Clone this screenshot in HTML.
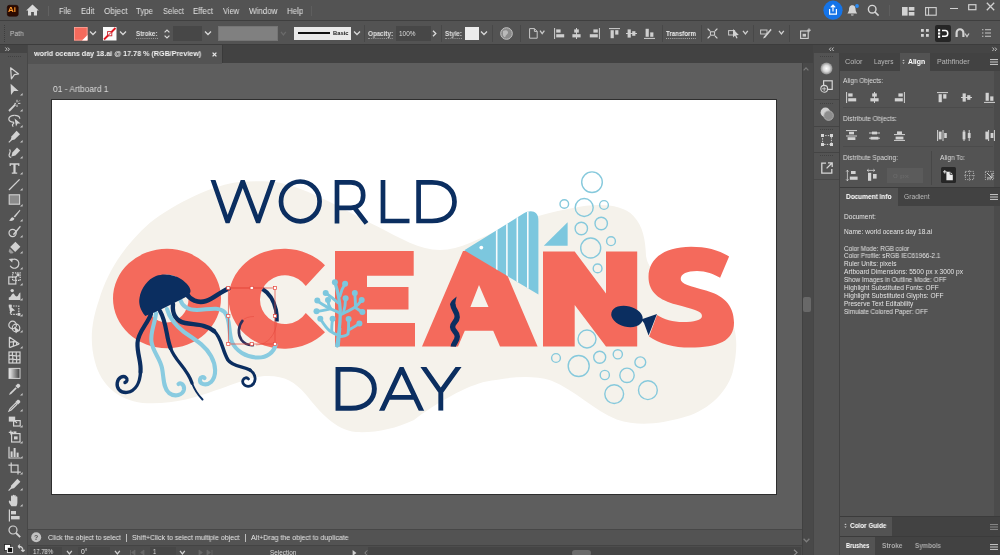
<!DOCTYPE html>
<html><head><meta charset="utf-8"><title>world oceans day 18.ai</title>
<style>
*{margin:0;padding:0;box-sizing:border-box}
html,body{width:1000px;height:555px;overflow:hidden;background:#535353;font-family:"Liberation Sans",sans-serif;}
#app{position:relative;width:1000px;height:555px;overflow:hidden;background:#535353;color:#e0e0e0;font-size:8px}
.abs{position:absolute}
.t{position:absolute;white-space:nowrap;line-height:1;transform-origin:0 50%;will-change:transform}
svg{overflow:visible}

</style></head>
<body><div id="app">
<div class="abs" style="left:0.0px;top:0.0px;width:1000.0px;height:555.0px;background:#535353;"></div>
<div class="abs" style="left:28.0px;top:63.0px;width:774.0px;height:466.0px;background:#5e5e5e;"></div>
<div class="abs" style="left:51.0px;top:99.0px;width:726.0px;height:396.0px;background:#2e2e2e;"></div>
<div class="abs" style="left:52.0px;top:100.0px;width:724.0px;height:394.0px;background:#ffffff;"></div>
<svg class="abs" style="left:52px;top:100px" width="724" height="394" viewBox="52 100 724 394">
<defs><clipPath id="fc"><path d="M464.3,250.3 L523.5,213.6 C528,210.6 533.5,210.4 536.3,213.4 C538,215.4 538.4,217.5 538.4,221 L538.4,294.6 Z"/></clipPath><clipPath id="cw"><rect x="200" y="179.9" width="90" height="43.3"/></clipPath><clipPath id="cd"><rect x="370" y="367" width="100" height="43.7"/></clipPath></defs>
<!-- blob -->
<path fill="#f5f2eb" d="M269,181.5 C300,183 340,208 378,226.7 C400,238 420,250 440,250 C460,250 480,238 503,228 C525,219 550,212 573,208 C595,203.5 621,203 633.5,216 C643,226 645.5,240 646,256 C650,285 700,295 729,316 C738,330 738,350 732.6,372.4 C726,395 705,412 682,417.7 C662,423 640,427 616.7,419.5 C595,411 575,390 551,380.5 C530,374 505,378 486.4,381.5 C468,385 436,403 414,420 C395,429 375,433 356,432 C335,430 320,412 305.4,394 C295,382 285,376 268,376 C250,376 235,384 215,390.5 C195,398 170,405 142.5,403 C118,400 101,385 95,362 C89,340 92,320 99,300 C108,270 125,245 149.7,223 C175,203 215,184 240,182 C250,181 260,181 269,181.5Z"/>
<!-- OCEANS -->
<g fill="#f46a5c">
<path fill-rule="evenodd" d="M113,298.5A54,49.7 0 1 0 221,298.5A54,49.7 0 1 0 113,298.5Z M145,298.5A21.8,24 0 1 0 188.6,298.5A21.8,24 0 1 0 145,298.5Z"/>
<path d="M325,265.2 A55.3,50 0 1 0 325,332.3 L305.8,313.1 A25,24.4 0 1 1 305.8,286.1 Z"/>
<path d="M335,251H413.7V275.7H367V287H408.5V309.6H367V323H415V346.6H335Z"/>
<path d="M463,251H497L537.6,346.6H500L493.2,330.7H464.8L458,346.6H422Z M479,285L470.4,307H488.5Z"/>
<path d="M543,251.5H574.7L606,293.5V251.5H637.2V346.6H606L574.7,305V346.6H543Z"/>
<path d="M729.1,256.4C719,250 706,246.7 691,246.7C664,246.7 648.5,259 648.5,276.7C648.5,293 660,300 676,304.5C692,309 702,310.5 702,316C702,320 694,322 683,322C673,322 664,319.5 657,315L649.1,336.4C659,343.5 674,347.6 690,347.6C718,347.6 734,341 734,322.8C734,304 722,295 706,290.5C690,286 680.7,284 680.7,278.9C680.7,274 687,271 697,271C706,271 714,274 720.1,277.8Z"/>
</g>
<!-- WORLD -->
<g fill="none" stroke="#0b2e60" stroke-width="4.7" stroke-linejoin="miter" stroke-miterlimit="4">
<path clip-path="url(#cw)" stroke-miterlimit="10" d="M211.6,176L227.6,221.8L242.7,181.4L258.1,221.8L274.4,176"/>
<ellipse cx="300.3" cy="201.4" rx="19.3" ry="19.9"/>
<path d="M337,223.4V182.4H351C360,182.4 363.2,189 363.2,195.2C363.2,201.5 360,207.8 351,207.8H337 M354.5,207.8L366.5,223.4"/>
<path d="M383,180V221H409.5"/>
<path d="M418.6,182.4V221H432C447,221 454.5,212 454.5,201.7C454.5,191.5 447,182.4 432,182.4Z"/>
</g>
<!-- DAY -->
<g fill="none" stroke="#0b2e60" stroke-width="4.9" stroke-linejoin="miter" stroke-miterlimit="4">
<path d="M338,369.4V408.3H351C366,408.3 374.4,399.5 374.4,388.8C374.4,378.2 366,369.4 351,369.4Z"/>
<path clip-path="url(#cd)" stroke-miterlimit="10" d="M380,414.5L401.6,368.6L423.2,414.5 M388,397.4H415.5"/>
<path clip-path="url(#cd)" stroke-miterlimit="10" d="M420.6,363L440.8,391.8L461.4,363 M440.8,391V410.7"/>
</g>
<!-- seaweed -->
<path fill="none" stroke="#0b2e60" stroke-width="5.4" d="M452.8,304.5 C453.5,310.5 457.5,312 457.2,317 C457,322 452.5,322.5 452.6,327 C452.7,331 457.3,332 457.3,336.5 C457.3,341 453.5,343 453.3,346.6"/>
<path fill="#0b2e60" d="M456.6,296.4 C453,299.5 449.8,302 450.1,305 L455.5,305.2 C455,302 456.2,299.5 456.6,296.4Z"/>
<!-- big fish -->
<path fill="#7cc7de" d="M464.3,250.3 L523.5,213.6 C528,210.6 533.5,210.4 536.3,213.4 C538,215.4 538.4,217.5 538.4,221 L538.4,294.6 Z"/>
<g clip-path="url(#fc)" stroke="#f7fbfc" stroke-width="1.6"><path d="M496.7,200V300M506.9,200V300M517.3,200V300M527.8,200V300"/></g>
<circle cx="481.3" cy="247.6" r="1.9" fill="#fff"/>
<path fill="#7cc7de" d="M543.8,245.8L567.6,222.2V245.8Z"/>
<!-- bubbles -->
<g fill="none" stroke="#86c9dc" stroke-width="1.4">
<circle cx="592" cy="182.2" r="10.3"/><circle cx="564.3" cy="204" r="4.3"/><circle cx="584.2" cy="207.5" r="9"/><circle cx="604" cy="205" r="4.4"/>
<circle cx="581.3" cy="228.5" r="6.2"/><circle cx="601.2" cy="223.5" r="6.2"/><circle cx="611" cy="241.2" r="4.4"/><circle cx="590.7" cy="248" r="10"/><circle cx="597.6" cy="268.4" r="4.4"/>
<circle cx="587" cy="339" r="9"/><circle cx="556" cy="358" r="4.4"/><circle cx="578.7" cy="366" r="10.5"/><circle cx="599.7" cy="357.2" r="6"/><circle cx="617.8" cy="354.3" r="4.6"/>
<circle cx="640.3" cy="362.3" r="5.4"/><circle cx="604.8" cy="375" r="4.6"/><circle cx="627" cy="375.3" r="7.2"/><circle cx="614.2" cy="394.1" r="9.4"/><circle cx="647.9" cy="390.2" r="9.4"/>
</g>
<!-- small fish -->
<g fill="#0b2e60"><ellipse cx="627" cy="316.4" rx="16" ry="10.3" transform="rotate(14 627 316.4)"/><path d="M641,319.5L657,314L648.6,335.6L644,323Z"/></g>
<g fill="none" stroke="#7cc7de" stroke-width="2.9" stroke-linecap="round" stroke-linejoin="round">
<path d="M337.2,346 C338.5,335 340.8,322 340.2,310 C339.7,300 338,292 335,282.5" stroke-width="3.3"/>
<path d="M340,296 C341,291 343,287 345.1,283.8"/>
<path d="M338.2,303 C334,299 330,296 325.7,293"/>
<path d="M317.3,300.6 C321,304 325,306 330,308.5 C333,310 336,311 339.5,313"/>
<path d="M328,299.9 C328,303 329,306 330.5,308.5"/>
<path d="M316.5,311.3 C320,311 325,310 330.5,308.8"/>
<path d="M320.3,318.7 C323,323 326,328 330,331 C333,333 336,334.5 338.5,335.5"/>
<path d="M332.6,318.7 C332,323 331.5,327 331.8,331.5"/>
<path d="M340.2,315 C346,312 351,310 355.5,306.8 C355.5,302 355,297 354.8,293"/>
<path d="M355.5,306.8 C358,305 360,302.5 361.7,299.9"/>
<path d="M345.6,298.3 C345.5,303 345,308 343.5,312.5"/>
<path d="M355,307.5 C358,309 360,311 362.4,312.1"/>
<path d="M339.5,336.5 C343,336.5 346,336 348,334 C348.8,329 348.6,324 348.6,319"/>
<path d="M348.3,330 C352,328 356,326 359.4,323.6"/>
</g>
<path fill="#7cc7de" d="M334.9,346.6L339.8,346.6L341.4,328L338.4,328Z"/>
<g fill="#7cc7de"><circle cx="334.9" cy="282.3" r="3"/><circle cx="345.1" cy="283.8" r="3"/><circle cx="325.7" cy="293" r="3"/><circle cx="317.3" cy="300.6" r="3"/><circle cx="328" cy="299.9" r="3"/><circle cx="316.5" cy="311.3" r="3"/><circle cx="320.3" cy="318.7" r="3"/><circle cx="332.6" cy="318.7" r="3"/><circle cx="354.8" cy="293" r="3"/><circle cx="345.6" cy="298.3" r="3"/><circle cx="361.7" cy="299.9" r="3"/><circle cx="362.4" cy="312.1" r="3"/><circle cx="348.6" cy="319" r="3"/><circle cx="359.4" cy="323.6" r="3"/></g>
<g fill="none" stroke="#89cbe0" stroke-width="4.1" stroke-linecap="round">
<path d="M156,313 C155,324 150,332 151.5,342 C153,352 160,358 162,368 C164,378 163,388 169,393 C175,397.5 183,395 184,389.5 C184.5,385 181,382 178.5,384" />
<path d="M167,309 C170,320 176,326 184,332 C194,339 205,345 211,356 C216,365 217,376 211,382 C206,386.5 199,384 200,379.5 C200.5,377 203,376.5 204.5,378"/>
<path d="M180,299 C182,306 188,310 197,310 C207,310 218,306 224.5,312 C231,319 228,332 232,342 C236,351 246,357 257,357.5 C267,358 274,352 275.5,345"/>
</g>
<g fill="none" stroke="#0b2e60" stroke-linecap="round">
<path stroke-width="4.6" d="M186,293 C190,300 198,303.5 206,301 C214,298.5 220,292 228.4,288.6"/>
<path stroke-width="4.2" d="M151,314 C147,325 138,332 137.5,343 C137,354 141.5,362 140.5,372"/>
<path stroke-width="3.4" d="M140.5,372 C140,382 136,391 127,392.4 C120,393 116.5,388 117.2,383 C118,377.5 123,375 126,377.5 C128,379 127,382 125,382.5"/>
<path stroke-width="4.2" d="M160,311 C167,323 166,337 170.5,348"/>
<path stroke-width="3.3" d="M170.500,348 C175,361 187,368 192,383"/>
<path stroke-width="2" d="M192,383 C195,391 199,396 202.500,399.500"/>
<path stroke-width="4.4" d="M173,304 C172,314 176,321 185,323 C195,325 206,324 214,331"/>
<path stroke-width="3.6" d="M214,331 C222,338 222,350 228,360 C233,367 243,366 250,370"/>
<path stroke-width="2.8" d="M250,370 C256,374 257,382 251.5,385.5 C246,388 241.5,384 243,380 C244,377.5 247,377 248.5,379"/>
</g>
<path fill="#0b2e60" d="M145.3,316 C140,310 138.5,303 139.5,298 C141,288 148,279 156,276 C164,273 174,274.5 181,279 C187,283 191,288 190.5,291.5 C190,295 186,297 182,299 L165,307.5 C158,311 150,314.5 145.3,316 Z"/>
<g fill="none" stroke="#0b2e60" stroke-linecap="butt">
<path stroke-width="4" d="M262.5,289 C269,293 274,301 276,310 C276.8,314 277,318 276.8,321.5"/>
<path stroke-width="2.6" stroke="#2a2f5c" d="M243,320 C238,326 237.5,334 241.5,340 C244.5,344 249,345.5 254,345"/>
</g>
<g fill="none" stroke="#e5453b" stroke-width="0.7">
<path d="M228.3,288H262.5 M276.8,321.5C276,334 268,345 256,345 M254,316.5C249,316.5 245,318 243,320" opacity="0.7"/>
<rect x="228.3" y="288" width="46.7" height="56"/>
</g>
<g fill="#fff" stroke="#e5453b" stroke-width="0.7"><rect x="226.7" y="286.4" width="3.2" height="3.2"/><rect x="250.1" y="286.4" width="3.2" height="3.2"/><rect x="273.4" y="286.4" width="3.2" height="3.2"/><rect x="226.7" y="314.4" width="3.2" height="3.2"/><rect x="273.4" y="314.4" width="3.2" height="3.2"/><rect x="226.7" y="342.4" width="3.2" height="3.2"/><rect x="250.1" y="342.4" width="3.2" height="3.2"/><rect x="273.4" y="342.4" width="3.2" height="3.2"/></g>
</svg>
<div class="abs" style="left:0.0px;top:20.0px;width:1000.0px;height:1.0px;background:#3f3f3f;"></div>
<svg class="abs" style="left:6.5px;top:4.5px" width="11.5" height="11.5" viewBox="0 0 11.5 11.5"><rect x="0.3" y="0.3" width="10.9" height="10.9" rx="2" fill="#2c0a00" stroke="#1e0700" stroke-width=".6"/></svg>
<div class="t" style="left:8.2px;top:7.4px;font-size:6.60px;color:#ff9b2e;font-weight:bold;transform:scaleX(1.212);">Ai</div>
<svg class="abs" style="left:25.5px;top:4.0px" width="13.0" height="12.0" viewBox="0 0 13 12"><path d="M6.5,0.6 L12.8,6.4 L11,6.4 L11,11.6 L7.9,11.6 L7.9,8 L5.1,8 L5.1,11.6 L2,11.6 L2,6.4 L0.2,6.4 Z" fill="#d9d9d9"/></svg>
<div class="abs" style="left:47.5px;top:6.0px;width:1.0px;height:10.0px;background:#626262;"></div>
<div class="t" style="left:58.5px;top:6.7px;font-size:8.60px;color:#e2e2e2;transform:scaleX(0.888);">File</div>
<div class="t" style="left:80.5px;top:6.7px;font-size:8.60px;color:#e2e2e2;transform:scaleX(0.897);">Edit</div>
<div class="t" style="left:103.5px;top:6.7px;font-size:8.60px;color:#e2e2e2;transform:scaleX(0.945);">Object</div>
<div class="t" style="left:136.0px;top:6.7px;font-size:8.60px;color:#e2e2e2;transform:scaleX(0.912);">Type</div>
<div class="t" style="left:162.5px;top:6.7px;font-size:8.60px;color:#e2e2e2;transform:scaleX(0.879);">Select</div>
<div class="t" style="left:193.0px;top:6.7px;font-size:8.60px;color:#e2e2e2;transform:scaleX(0.916);">Effect</div>
<div class="t" style="left:223.0px;top:6.7px;font-size:8.60px;color:#e2e2e2;transform:scaleX(0.866);">View</div>
<div class="t" style="left:248.5px;top:6.7px;font-size:8.60px;color:#e2e2e2;transform:scaleX(0.932);">Window</div>
<div class="t" style="left:287.0px;top:6.7px;font-size:8.60px;color:#e2e2e2;transform:scaleX(0.916);">Help</div>
<div class="abs" style="left:311.0px;top:6.0px;width:1.0px;height:10.0px;background:#5e5e5e;"></div>
<svg class="abs" style="left:823.0px;top:0.0px" width="20.0" height="20.5" viewBox="0 0 20 20.5"><circle cx="10" cy="10.2" r="9.6" fill="#1574e8"/><path d="M6.6,9 V14.2 H13.4 V9 M10,11.6 V5.2 M7.8,7.3 L10,5 L12.2,7.3" fill="none" stroke="#fff" stroke-width="1.2"/></svg>
<svg class="abs" style="left:846.0px;top:4.0px" width="13.0" height="13.0" viewBox="0 0 13 13"><path d="M6.3,1.2 C3.6,1.2 3,3.6 3,5.6 C3,7.6 2,8.6 1.4,9.4 H11.2 C10.6,8.6 9.6,7.6 9.6,5.6 C9.6,3.6 9,1.2 6.3,1.2Z M5,10.4 H7.6 V11 C7.6,11.8 5,11.8 5,11Z" fill="#d4d4d4"/><circle cx="11" cy="2" r="1.9" fill="#2b8cf4"/></svg>
<svg class="abs" style="left:867.0px;top:4.0px" width="13.0" height="13.0" viewBox="0 0 13 13"><circle cx="5.2" cy="5.2" r="3.8" fill="none" stroke="#d6d6d6" stroke-width="1.4"/><path d="M8,8 L11.6,11.6" stroke="#d6d6d6" stroke-width="1.6"/></svg>
<div class="abs" style="left:889.0px;top:5.0px;width:1.0px;height:11.0px;background:#5e5e5e;"></div>
<svg class="abs" style="left:901.5px;top:6.5px" width="12.5" height="9.0" viewBox="0 0 12.5 9"><rect x="0" y="0" width="5.6" height="8.6" fill="#d2d2d2"/><rect x="6.8" y="0" width="5.6" height="3.6" fill="#d2d2d2"/><rect x="6.8" y="5" width="5.6" height="3.6" fill="#d2d2d2"/></svg>
<svg class="abs" style="left:924.5px;top:6.5px" width="12.0" height="9.0" viewBox="0 0 12 9"><rect x=".6" y=".6" width="10.6" height="7.6" fill="none" stroke="#d2d2d2" stroke-width="1.1"/><path d="M3.6,.6V8.2" stroke="#d2d2d2" stroke-width="1"/></svg>
<div class="abs" style="left:950.0px;top:7.6px;width:8.0px;height:1.6px;background:#d0d0d0;"></div>
<svg class="abs" style="left:967.5px;top:3.5px" width="9.0" height="7.0" viewBox="0 0 9 7"><rect x=".7" y=".7" width="7.2" height="5" fill="none" stroke="#d0d0d0" stroke-width="1.2"/></svg>
<svg class="abs" style="left:986.0px;top:1.8px" width="9.0" height="9.0" viewBox="0 0 9 9"><path d="M.8,.8 L8.2,8.2 M8.2,.8 L.8,8.2" stroke="#d0d0d0" stroke-width="1.3"/></svg>
<div class="abs" style="left:0.0px;top:44.0px;width:1000.0px;height:1.0px;background:#3c3c3c;"></div>
<div class="abs" style="left:3.5px;top:25.0px;width:1.4px;height:1.0px;background:#3d3d3d;"></div>
<div class="abs" style="left:3.5px;top:27.0px;width:1.4px;height:1.0px;background:#3d3d3d;"></div>
<div class="abs" style="left:3.5px;top:29.0px;width:1.4px;height:1.0px;background:#3d3d3d;"></div>
<div class="abs" style="left:3.5px;top:31.0px;width:1.4px;height:1.0px;background:#3d3d3d;"></div>
<div class="abs" style="left:3.5px;top:33.0px;width:1.4px;height:1.0px;background:#3d3d3d;"></div>
<div class="abs" style="left:3.5px;top:35.0px;width:1.4px;height:1.0px;background:#3d3d3d;"></div>
<div class="abs" style="left:3.5px;top:37.0px;width:1.4px;height:1.0px;background:#3d3d3d;"></div>
<div class="abs" style="left:3.5px;top:39.0px;width:1.4px;height:1.0px;background:#3d3d3d;"></div>
<div class="abs" style="left:3.5px;top:41.0px;width:1.4px;height:1.0px;background:#3d3d3d;"></div>
<div class="t" style="left:10.0px;top:30.9px;font-size:6.80px;color:#c4c4c4;transform:scaleX(0.965);">Path</div>
<svg class="abs" style="left:74.0px;top:26.5px" width="13.5" height="13.5" viewBox="0 0 13.5 13.5"><rect width="13.5" height="13.5" fill="#f46a5c"/><rect x=".4" y=".4" width="12.7" height="12.7" fill="none" stroke="#f9a59c" stroke-width=".8"/><path d="M13.5,8 V13.5 H8Z" fill="#fff"/></svg>
<svg class="abs" style="left:89.0px;top:30.2px" width="8.0" height="6.0" viewBox="0 0 8 6"><path d="M1,1.5 L4,4.5 L7,1.5" fill="none" stroke="#d8d8d8" stroke-width="1.3"/></svg>
<svg class="abs" style="left:103.0px;top:26.5px" width="13.5" height="13.5" viewBox="0 0 13.5 13.5"><rect width="13.5" height="13.5" fill="#fafafa"/><path d="M1,12.5 L12.5,1" stroke="#e1131c" stroke-width="1.8"/><rect x="4.6" y="4.6" width="4.2" height="4.2" fill="#fafafa" stroke="#c8202a" stroke-width=".9"/><path d="M4,9.5 L9.5,4" stroke="#e1131c" stroke-width="1"/></svg>
<svg class="abs" style="left:118.5px;top:30.2px" width="8.0" height="6.0" viewBox="0 0 8 6"><path d="M1,1.5 L4,4.5 L7,1.5" fill="none" stroke="#d8d8d8" stroke-width="1.3"/></svg>
<div class="t" style="left:136.0px;top:31.0px;font-size:6.60px;color:#e0e0e0;font-weight:bold;transform:scaleX(0.945);border-bottom:1px dotted #9a9a9a;padding-bottom:0.5px;">Stroke:</div>
<svg class="abs" style="left:164.0px;top:28.5px" width="6.0" height="10.0" viewBox="0 0 6 10"><path d="M.6,3.4 L3,1 L5.4,3.4 M.6,6.6 L3,9 L5.4,6.6" fill="none" stroke="#d8d8d8" stroke-width="1.2"/></svg>
<div class="abs" style="left:173.0px;top:26.0px;width:29.0px;height:15.0px;background:#474747;"></div>
<svg class="abs" style="left:203.5px;top:30.2px" width="8.0" height="6.0" viewBox="0 0 8 6"><path d="M1,1.5 L4,4.5 L7,1.5" fill="none" stroke="#d8d8d8" stroke-width="1.3"/></svg>
<div class="abs" style="left:218.0px;top:26.0px;width:59.5px;height:14.5px;background:#808080;border:1px solid #757575;"></div>
<svg class="abs" style="left:280.1px;top:31.0px" width="6.8" height="4.8" viewBox="0 0 6.8 4.8"><path d="M1,0.9 L3.4,3.9 L5.8,0.9" fill="none" stroke="#6a6a6a" stroke-width="1.3"/></svg>
<div class="abs" style="left:294.0px;top:26.5px;width:57.0px;height:13.5px;background:#e9e9e9;"></div>
<div class="abs" style="left:297.5px;top:32.2px;width:32.5px;height:2.0px;background:#111;"></div>
<div class="t" style="left:332.5px;top:31.0px;font-size:5.80px;color:#1a1a1a;font-weight:bold;transform:scaleX(1.001);">Basic</div>
<svg class="abs" style="left:352.5px;top:30.2px" width="8.0" height="6.0" viewBox="0 0 8 6"><path d="M1,1.5 L4,4.5 L7,1.5" fill="none" stroke="#d8d8d8" stroke-width="1.3"/></svg>
<div class="abs" style="left:364.0px;top:25.0px;width:1.0px;height:17.0px;background:#484848;"></div>
<div class="t" style="left:367.5px;top:31.0px;font-size:6.60px;color:#e0e0e0;font-weight:bold;transform:scaleX(0.947);border-bottom:1px dotted #9a9a9a;padding-bottom:0.5px;">Opacity:</div>
<div class="abs" style="left:395.5px;top:26.0px;width:35.0px;height:15.0px;background:#474747;"></div>
<div class="t" style="left:398.5px;top:31.1px;font-size:6.40px;color:#dcdcdc;transform:scaleX(1.008);">100%</div>
<svg class="abs" style="left:432.0px;top:30.0px" width="5.0" height="7.0" viewBox="0 0 5 7"><path d="M1,.8 L3.8,3.5 L1,6.2" fill="none" stroke="#dcdcdc" stroke-width="1.3"/></svg>
<div class="abs" style="left:441.0px;top:25.0px;width:1.0px;height:17.0px;background:#484848;"></div>
<div class="t" style="left:444.5px;top:31.0px;font-size:6.60px;color:#e0e0e0;font-weight:bold;transform:scaleX(0.946);border-bottom:1px dotted #9a9a9a;padding-bottom:0.5px;">Style:</div>
<div class="abs" style="left:465.0px;top:26.5px;width:13.5px;height:13.5px;background:#ececec;"></div>
<svg class="abs" style="left:480.0px;top:30.2px" width="8.0" height="6.0" viewBox="0 0 8 6"><path d="M1,1.5 L4,4.5 L7,1.5" fill="none" stroke="#d8d8d8" stroke-width="1.3"/></svg>
<div class="abs" style="left:492.0px;top:25.0px;width:1.0px;height:17.0px;background:#484848;"></div>
<svg class="abs" style="left:499.5px;top:27.0px" width="13.0" height="13.0" viewBox="0 0 13 13"><circle cx="6.5" cy="6.5" r="5.8" fill="#8a8a8a" stroke="#c4c4c4" stroke-width="1"/><path d="M3,4 C5,2.5 7.5,3 8,5 C8.5,7 6,7.5 5.5,9.5 C5,11 3.5,10 3,8Z" fill="#b9b9b9"/></svg>
<div class="abs" style="left:519.5px;top:25.0px;width:1.0px;height:17.0px;background:#484848;"></div>
<svg class="abs" style="left:529.0px;top:27.5px" width="9.0" height="11.0" viewBox="0 0 9 11"><path d="M.6,.6 H5.4 L8.2,3.4 V10.2 H.6Z M5.4,.6 V3.4 H8.2" fill="none" stroke="#c8c8c8" stroke-width="1"/></svg>
<svg class="abs" style="left:539.3px;top:30.4px" width="6.4" height="4.4" viewBox="0 0 6.4 4.4"><path d="M1,0.7 L3.2,3.7 L5.4,0.7" fill="none" stroke="#c8c8c8" stroke-width="1.3"/></svg>
<svg class="abs" style="left:553.5px;top:27.7px" width="11.0" height="11.0" viewBox="0 0 11 11"><path d="M.6,0V11" stroke="#cfcfcf" stroke-width="1"/><rect x="2.2" y="1.4" width="4.4" height="3.2" fill="#cfcfcf"/><rect x="2.2" y="6.2" width="8" height="3.2" fill="#cfcfcf"/></svg>
<svg class="abs" style="left:571.0px;top:27.7px" width="11.0" height="11.0" viewBox="0 0 11 11"><path d="M5.5,0V11" stroke="#cfcfcf" stroke-width="1"/><rect x="3.2" y="1.4" width="4.6" height="3.2" fill="#cfcfcf"/><rect x="1.4" y="6.2" width="8.2" height="3.2" fill="#cfcfcf"/></svg>
<svg class="abs" style="left:588.5px;top:27.7px" width="11.0" height="11.0" viewBox="0 0 11 11"><path d="M10.4,0V11" stroke="#cfcfcf" stroke-width="1"/><rect x="4.4" y="1.4" width="4.4" height="3.2" fill="#cfcfcf"/><rect x=".8" y="6.2" width="8" height="3.2" fill="#cfcfcf"/></svg>
<svg class="abs" style="left:608.5px;top:27.7px" width="11.0" height="11.0" viewBox="0 0 11 11"><path d="M0,.6H11" stroke="#cfcfcf" stroke-width="1"/><rect x="1.6" y="2.2" width="3.2" height="8" fill="#cfcfcf"/><rect x="6.2" y="2.2" width="3.2" height="4.4" fill="#cfcfcf"/></svg>
<svg class="abs" style="left:626.0px;top:27.7px" width="11.0" height="11.0" viewBox="0 0 11 11"><path d="M0,5.5H11" stroke="#cfcfcf" stroke-width="1"/><rect x="1.6" y="1.4" width="3.2" height="8.2" fill="#cfcfcf"/><rect x="6.2" y="3.2" width="3.2" height="4.6" fill="#cfcfcf"/></svg>
<svg class="abs" style="left:643.5px;top:27.7px" width="11.0" height="11.0" viewBox="0 0 11 11"><path d="M0,10.4H11" stroke="#cfcfcf" stroke-width="1"/><rect x="1.6" y=".8" width="3.2" height="8" fill="#cfcfcf"/><rect x="6.2" y="4.4" width="3.2" height="4.4" fill="#cfcfcf"/></svg>
<div class="abs" style="left:662.0px;top:25.0px;width:1.0px;height:17.0px;background:#484848;"></div>
<div class="t" style="left:666.0px;top:30.7px;font-size:6.40px;color:#f0f0f0;font-weight:bold;transform:scaleX(0.959);border-bottom:1px dotted #aaa;padding-bottom:0.5px;">Transform</div>
<div class="abs" style="left:701.0px;top:25.0px;width:1.0px;height:17.0px;background:#484848;"></div>
<svg class="abs" style="left:706.5px;top:27.5px" width="11.0" height="11.0" viewBox="0 0 11 11"><rect x="3.4" y="3.8" width="4.2" height="3.4" fill="none" stroke="#d2d2d2" stroke-width="1"/><path d="M.6,.6L3,3M10.4,.6L8,3M.6,10.4L3,8M10.4,10.4L8,8" stroke="#d2d2d2" stroke-width="1.2"/></svg>
<svg class="abs" style="left:727.5px;top:27.5px" width="12.0" height="11.0" viewBox="0 0 12 11"><rect x=".6" y="2.6" width="6" height="4.4" fill="none" stroke="#c8c8c8" stroke-width="1"/><path d="M5,1 L5,9.4 L7,7.6 L8.4,10.6 L9.6,10 L8.2,7.2 L10.8,7Z" fill="#d2d2d2"/></svg>
<svg class="abs" style="left:742.1px;top:30.4px" width="6.8" height="4.8" viewBox="0 0 6.8 4.8"><path d="M1,0.9 L3.4,3.9 L5.8,0.9" fill="none" stroke="#d0d0d0" stroke-width="1.3"/></svg>
<div class="abs" style="left:753.0px;top:25.0px;width:1.0px;height:17.0px;background:#484848;"></div>
<svg class="abs" style="left:759.5px;top:27.5px" width="12.0" height="11.0" viewBox="0 0 12 11"><rect x=".6" y="2" width="6.4" height="4" fill="none" stroke="#c8c8c8" stroke-width="1"/><path d="M10.6,.8 L4,8.6 L3,10.6 L5.2,9.8 L11.6,2Z" fill="#d2d2d2"/></svg>
<svg class="abs" style="left:777.6px;top:30.4px" width="6.8" height="4.8" viewBox="0 0 6.8 4.8"><path d="M1,0.9 L3.4,3.9 L5.8,0.9" fill="none" stroke="#d0d0d0" stroke-width="1.3"/></svg>
<div class="abs" style="left:789.0px;top:25.0px;width:1.0px;height:17.0px;background:#484848;"></div>
<svg class="abs" style="left:799.5px;top:27.5px" width="11.0" height="11.0" viewBox="0 0 11 11"><rect x=".6" y="3" width="7.6" height="7.4" fill="none" stroke="#d2d2d2" stroke-width="1.1"/><rect x="2.6" y="5.8" width="3.4" height="2.8" fill="#c8c8c8"/><path d="M9,.4V4.2M7.2,2.2H10.8" stroke="#d2d2d2" stroke-width="1"/></svg>
<svg class="abs" style="left:921.0px;top:29.0px" width="8.0" height="8.0" viewBox="0 0 8 8"><rect x="0" y="0" width="2.8" height="2.8" fill="#d2d2d2"/><rect x="5" y="0" width="2.8" height="2.8" fill="#d2d2d2"/><rect x="0" y="5" width="2.8" height="2.8" fill="#d2d2d2"/><rect x="5" y="5" width="2.8" height="2.8" fill="#d2d2d2"/></svg>
<div class="abs" style="left:935.0px;top:25.0px;width:15.5px;height:16.5px;background:#262626;border-radius:2px;"></div>
<svg class="abs" style="left:937.5px;top:28.5px" width="11.0" height="9.0" viewBox="0 0 11 9"><rect x="0" y=".2" width="2.2" height="2.2" fill="#fff"/><rect x="0" y="3.4" width="2.2" height="2.2" fill="#fff"/><rect x="0" y="6.6" width="2.2" height="2.2" fill="#fff"/><path d="M4,1.6H7.2C10.6,1.6 10.6,7.2 7.2,7.2H4" fill="none" stroke="#fff" stroke-width="1.5"/></svg>
<svg class="abs" style="left:954.5px;top:28.0px" width="10.0" height="10.0" viewBox="0 0 10 10"><path d="M1.6,9 V5 C1.6,0 8.4,0 8.4,5 V9" fill="none" stroke="#d2d2d2" stroke-width="2.2"/></svg>
<svg class="abs" style="left:964.0px;top:33.0px" width="6.0" height="4.0" viewBox="0 0 6 4"><path d="M1,0.5 L3,3.5 L5,0.5" fill="none" stroke="#c8c8c8" stroke-width="1.3"/></svg>
<svg class="abs" style="left:981.5px;top:29.0px" width="9.0" height="8.0" viewBox="0 0 9 8"><path d="M0,.8H1.4M0,4H1.4M0,7.2H1.4M3,.8H9M3,4H9M3,7.2H9" stroke="#c8c8c8" stroke-width="1.1"/></svg>
<div class="abs" style="left:28.0px;top:45.0px;width:812.0px;height:18.0px;background:#424242;"></div>
<div class="abs" style="left:28.0px;top:45.0px;width:193.5px;height:18.5px;background:#535353;"></div>
<div class="abs" style="left:221.5px;top:45.0px;width:1.0px;height:18.0px;background:#3a3a3a;"></div>
<div class="t" style="left:33.5px;top:50.4px;font-size:7.90px;color:#f2f2f2;font-weight:bold;transform:scaleX(0.909);">world oceans day 18.ai @ 17.78 % (RGB/Preview)</div>
<svg class="abs" style="left:211.5px;top:52.0px" width="5.0" height="5.0" viewBox="0 0 5 5"><path d="M.6,.6L4.4,4.4M4.4,.6L.6,4.4" stroke="#e8e8e8" stroke-width="1.3"/></svg>
<div class="t" style="left:52.5px;top:85.1px;font-size:8.60px;color:#dadada;transform:scaleX(0.976);">01 - Artboard 1</div>
<div class="abs" style="left:801.5px;top:63.0px;width:11.5px;height:492.0px;background:#494949;"></div>
<div class="abs" style="left:801.5px;top:63.0px;width:1.0px;height:492.0px;background:#414141;"></div>
<div class="abs" style="left:802.5px;top:296.5px;width:8.8px;height:15.5px;background:#686868;border-radius:2px;"></div>
<svg class="abs" style="left:803.0px;top:66.5px" width="6.0" height="4.0" viewBox="0 0 6 4"><path d="M.6,3.4L3,.8L5.4,3.4" fill="none" stroke="#7a7a7a" stroke-width="1.2"/></svg>
<svg class="abs" style="left:803.0px;top:537.5px" width="7.0" height="5.0" viewBox="0 0 7 5"><path d="M.6,.8L3.5,3.8L6.4,.8" fill="none" stroke="#7d7d7d" stroke-width="1.3"/></svg>
<div class="abs" style="left:28.0px;top:529.0px;width:773.5px;height:16.0px;background:#535353;"></div>
<div class="abs" style="left:28.0px;top:529.0px;width:773.5px;height:1.0px;background:#474747;"></div>
<svg class="abs" style="left:31.0px;top:532.0px" width="10.5" height="10.5" viewBox="0 0 10.5 10.5"><circle cx="5.2" cy="5.2" r="5" fill="#c2c2c2"/></svg>
<div class="t" style="left:34.2px;top:534.2px;font-size:7.00px;color:#555;font-weight:bold;transform:scaleX(0.935);">?</div>
<div class="t" style="left:48.0px;top:534.4px;font-size:7.20px;color:#e8e8e8;transform:scaleX(0.940);">Click the object to select</div>
<div class="abs" style="left:126.3px;top:533.5px;width:1.0px;height:8.0px;background:#bdbdbd;"></div>
<div class="t" style="left:132.0px;top:534.4px;font-size:7.20px;color:#e8e8e8;transform:scaleX(0.969);">Shift+Click to select multiple object</div>
<div class="abs" style="left:245.4px;top:533.5px;width:1.0px;height:8.0px;background:#bdbdbd;"></div>
<div class="t" style="left:250.6px;top:534.4px;font-size:7.20px;color:#e8e8e8;transform:scaleX(0.975);">Alt+Drag the object to duplicate</div>
<div class="abs" style="left:28.0px;top:545.5px;width:773.5px;height:9.5px;background:#4d4d4d;"></div>
<div class="abs" style="left:28.0px;top:545.0px;width:773.5px;height:1.0px;background:#444;"></div>
<div class="abs" style="left:30.0px;top:547.0px;width:32.0px;height:8.0px;background:#474747;"></div>
<div class="t" style="left:32.5px;top:549.3px;font-size:6.60px;color:#e6e6e6;transform:scaleX(0.893);">17.78%</div>
<svg class="abs" style="left:65.6px;top:549.6px" width="6.8" height="4.8" viewBox="0 0 6.8 4.8"><path d="M1,0.9 L3.4,3.9 L5.8,0.9" fill="none" stroke="#d0d0d0" stroke-width="1.3"/></svg>
<div class="abs" style="left:78.0px;top:547.0px;width:32.0px;height:8.0px;background:#474747;"></div>
<div class="t" style="left:80.5px;top:549.3px;font-size:6.60px;color:#e6e6e6;transform:scaleX(1.030);">0°</div>
<svg class="abs" style="left:113.6px;top:549.6px" width="6.8" height="4.8" viewBox="0 0 6.8 4.8"><path d="M1,0.9 L3.4,3.9 L5.8,0.9" fill="none" stroke="#d0d0d0" stroke-width="1.3"/></svg>
<svg class="abs" style="left:130.0px;top:549.5px" width="16.0" height="5.0" viewBox="0 0 16 5"><path d="M.5,0V5M5,0L1.6,2.6L5,5Z M14,0L10.6,2.6L14,5Z" fill="#686868" stroke="#686868" stroke-width=".8"/></svg>
<div class="abs" style="left:150.0px;top:547.0px;width:26.0px;height:8.0px;background:#474747;"></div>
<div class="t" style="left:153.0px;top:549.3px;font-size:6.60px;color:#e6e6e6;transform:scaleX(0.817);">1</div>
<svg class="abs" style="left:179.1px;top:549.6px" width="6.8" height="4.8" viewBox="0 0 6.8 4.8"><path d="M1,0.9 L3.4,3.9 L5.8,0.9" fill="none" stroke="#d0d0d0" stroke-width="1.3"/></svg>
<svg class="abs" style="left:197.0px;top:549.5px" width="16.0" height="5.0" viewBox="0 0 16 5"><path d="M2,0L5.4,2.6L2,5Z M10,0L13.4,2.6L10,5Z M15,0V5" fill="#686868" stroke="#686868" stroke-width=".8"/></svg>
<div class="t" style="left:270.0px;top:550.3px;font-size:6.40px;color:#dadada;transform:scaleX(0.988);">Selection</div>
<svg class="abs" style="left:352.0px;top:549.5px" width="5.0" height="5.5" viewBox="0 0 5 5.5"><path d="M.6,0L4.4,3L.6,6Z" fill="#cfcfcf"/></svg>
<svg class="abs" style="left:363.5px;top:549.5px" width="4.0" height="5.5" viewBox="0 0 4 5.5"><path d="M3.2,.4L.8,3L3.2,5.6" fill="none" stroke="#8a8a8a" stroke-width="1"/></svg>
<div class="abs" style="left:368.0px;top:547.0px;width:433.0px;height:8.0px;background:#454545;"></div>
<div class="abs" style="left:571.5px;top:550.0px;width:19.0px;height:6.0px;background:#6b6b6b;border-radius:3px;"></div>
<svg class="abs" style="left:793.0px;top:548.5px" width="5.0" height="7.0" viewBox="0 0 5 7"><path d="M1,.8L4,3.6L1,6.4" fill="none" stroke="#8a8a8a" stroke-width="1.2"/></svg>
<div class="abs" style="left:0.0px;top:45.0px;width:28.0px;height:510.0px;background:#535353;"></div>
<div class="abs" style="left:0.0px;top:45.0px;width:28.0px;height:8.0px;background:#454545;"></div>
<div class="abs" style="left:27.0px;top:45.0px;width:1.0px;height:510.0px;background:#474747;"></div>
<svg class="abs" style="left:4.5px;top:46.5px" width="5.0" height="4.5" viewBox="0 0 5 4.5"><path d="M.4,.5L2,2.2L.4,4 M2.8,.5L4.4,2.2L2.8,4" fill="none" stroke="#cfcfcf" stroke-width=".9"/></svg>
<div class="abs" style="left:8.0px;top:55.5px;width:1.0px;height:1.0px;background:#414141;"></div>
<div class="abs" style="left:10.0px;top:55.5px;width:1.0px;height:1.0px;background:#414141;"></div>
<div class="abs" style="left:12.0px;top:55.5px;width:1.0px;height:1.0px;background:#414141;"></div>
<div class="abs" style="left:14.0px;top:55.5px;width:1.0px;height:1.0px;background:#414141;"></div>
<div class="abs" style="left:16.0px;top:55.5px;width:1.0px;height:1.0px;background:#414141;"></div>
<div class="abs" style="left:18.0px;top:55.5px;width:1.0px;height:1.0px;background:#414141;"></div>
<div class="abs" style="left:20.0px;top:55.5px;width:1.0px;height:1.0px;background:#414141;"></div>
<svg class="abs" style="left:7.5px;top:67.0px" width="13.0" height="13.0" viewBox="0 0 13 13"><path d="M2.6,.8 L10.6,7 L6.4,7.6 L3.4,11.8Z" fill="none" stroke="#d2d2d2" stroke-width="1.2" stroke-linejoin="round"/></svg>
<svg class="abs" style="left:7.5px;top:82.8px" width="13.0" height="13.0" viewBox="0 0 13 13"><path d="M2.6,.8 L10.6,8 L6,8 L3,12Z" fill="#d2d2d2"/></svg>
<svg class="abs" style="left:20.3px;top:92.9px" width="2.6" height="2.6" viewBox="0 0 2.6 2.6"><path d="M2.6,0V2.6H0Z" fill="#c6c6c6"/></svg>
<svg class="abs" style="left:7.5px;top:98.6px" width="13.0" height="13.0" viewBox="0 0 13 13"><path d="M1,12 L7.4,5.4" stroke="#d2d2d2" stroke-width="1.8"/><path d="M9,.8V3.4M9,5.6V8M6.4,4.4H8M10,4.4H12.4M10.8,2.4L11.6,1.6" stroke="#d2d2d2" stroke-width="1"/></svg>
<svg class="abs" style="left:20.3px;top:108.7px" width="2.6" height="2.6" viewBox="0 0 2.6 2.6"><path d="M2.6,0V2.6H0Z" fill="#c6c6c6"/></svg>
<svg class="abs" style="left:7.5px;top:114.4px" width="13.0" height="13.0" viewBox="0 0 13 13"><path d="M6.4,1.4 C2.8,1.4 .8,3.2 .8,5 C.8,6.8 2.8,8.2 5,8.2 C6,8.2 6,9.4 5,10 C4,10.6 4.4,12 5.4,12.4" fill="none" stroke="#d2d2d2" stroke-width="1.2"/><path d="M6.4,1.4C10,1.4 11.8,3 11.8,4.8" fill="none" stroke="#d2d2d2" stroke-width="1.2"/><path d="M6.6,4.6L12.6,9.4L9.6,9.6L8,12.4Z" fill="#d2d2d2"/></svg>
<svg class="abs" style="left:20.3px;top:124.5px" width="2.6" height="2.6" viewBox="0 0 2.6 2.6"><path d="M2.6,0V2.6H0Z" fill="#c6c6c6"/></svg>
<svg class="abs" style="left:7.5px;top:130.2px" width="13.0" height="13.0" viewBox="0 0 13 13"><path d="M8.6,.8L12,4.2L6.6,9.4L2.6,10.4L3.6,6.2Z" fill="#d2d2d2"/><path d="M.8,12.4L3.4,9.8" stroke="#d2d2d2" stroke-width="1.2"/></svg>
<svg class="abs" style="left:20.3px;top:140.3px" width="2.6" height="2.6" viewBox="0 0 2.6 2.6"><path d="M2.6,0V2.6H0Z" fill="#c6c6c6"/></svg>
<svg class="abs" style="left:7.5px;top:146.0px" width="13.0" height="13.0" viewBox="0 0 13 13"><path d="M9,1.4L12.2,4.6L7.4,9.6L3.4,10.6L4.4,6.6Z" fill="#d2d2d2"/><path d="M3.2,11.4C1,11.4 .6,9.4 1.6,7.6C2.6,5.8 2.6,4.6 1.6,3.4" fill="none" stroke="#d2d2d2" stroke-width="1.2"/></svg>
<svg class="abs" style="left:20.3px;top:156.1px" width="2.6" height="2.6" viewBox="0 0 2.6 2.6"><path d="M2.6,0V2.6H0Z" fill="#c6c6c6"/></svg>
<svg class="abs" style="left:7.5px;top:161.8px" width="13.0" height="13.0" viewBox="0 0 13 13"><path d="M1.6,1.2H11.4V4H10.2V2.8H7.6V10.6H9.2V11.8H3.8V10.6H5.4V2.8H2.8V4H1.6Z" fill="#d2d2d2"/></svg>
<svg class="abs" style="left:20.3px;top:171.9px" width="2.6" height="2.6" viewBox="0 0 2.6 2.6"><path d="M2.6,0V2.6H0Z" fill="#c6c6c6"/></svg>
<svg class="abs" style="left:7.5px;top:177.6px" width="13.0" height="13.0" viewBox="0 0 13 13"><path d="M1,12L11.6,1.4" stroke="#d2d2d2" stroke-width="1.3"/></svg>
<svg class="abs" style="left:20.3px;top:187.7px" width="2.6" height="2.6" viewBox="0 0 2.6 2.6"><path d="M2.6,0V2.6H0Z" fill="#c6c6c6"/></svg>
<svg class="abs" style="left:7.5px;top:193.4px" width="13.0" height="13.0" viewBox="0 0 13 13"><rect x="1.2" y="1.8" width="10.4" height="9.4" fill="#8b8b8b" stroke="#d2d2d2" stroke-width="1.1"/></svg>
<svg class="abs" style="left:20.3px;top:203.5px" width="2.6" height="2.6" viewBox="0 0 2.6 2.6"><path d="M2.6,0V2.6H0Z" fill="#c6c6c6"/></svg>
<svg class="abs" style="left:7.5px;top:209.2px" width="13.0" height="13.0" viewBox="0 0 13 13"><path d="M11.8,.8L5.6,7.4L7,8.6L12.4,1.6Z" fill="#d2d2d2"/><path d="M4.8,8.2C3,8.2 3,10 1,11.6C3.4,12.4 6.2,11.6 6.4,9.6Z" fill="#d2d2d2"/></svg>
<svg class="abs" style="left:20.3px;top:219.3px" width="2.6" height="2.6" viewBox="0 0 2.6 2.6"><path d="M2.6,0V2.6H0Z" fill="#c6c6c6"/></svg>
<svg class="abs" style="left:7.5px;top:225.0px" width="13.0" height="13.0" viewBox="0 0 13 13"><circle cx="4.6" cy="8" r="3.6" fill="none" stroke="#d2d2d2" stroke-width="1.2"/><path d="M12,.8L5.6,8.2L5,10L6.8,9.4L12.8,1.8Z" fill="#d2d2d2"/></svg>
<svg class="abs" style="left:20.3px;top:235.1px" width="2.6" height="2.6" viewBox="0 0 2.6 2.6"><path d="M2.6,0V2.6H0Z" fill="#c6c6c6"/></svg>
<svg class="abs" style="left:7.5px;top:240.8px" width="13.0" height="13.0" viewBox="0 0 13 13"><path d="M7.4,.8L12.4,5.8L7.2,11L2.2,6Z" fill="#d2d2d2"/><path d="M1.6,7.4L5.6,11.4L4.4,12.4H2.4L.6,10.4Z" fill="#9a9a9a"/></svg>
<svg class="abs" style="left:20.3px;top:250.9px" width="2.6" height="2.6" viewBox="0 0 2.6 2.6"><path d="M2.6,0V2.6H0Z" fill="#c6c6c6"/></svg>
<svg class="abs" style="left:7.5px;top:256.6px" width="13.0" height="13.0" viewBox="0 0 13 13"><path d="M3,3.4A4.6,4.6 0 1 1 2.2,8.8" fill="none" stroke="#d2d2d2" stroke-width="1.2" stroke-width="1.5"/><path d="M.6,2L4.8,1.4L4.2,5.6Z" fill="#d2d2d2"/></svg>
<svg class="abs" style="left:20.3px;top:266.7px" width="2.6" height="2.6" viewBox="0 0 2.6 2.6"><path d="M2.6,0V2.6H0Z" fill="#c6c6c6"/></svg>
<svg class="abs" style="left:7.5px;top:272.4px" width="13.0" height="13.0" viewBox="0 0 13 13"><rect x=".8" y="5" width="7" height="7" fill="none" stroke="#d2d2d2" stroke-width="1.2"/><rect x="4.6" y=".8" width="7.6" height="7.6" fill="none" stroke="#d2d2d2" stroke-width="1.2" stroke-dasharray="1.4 .9"/><path d="M7,6L10.6,2.4M8.4,2.2H10.8V4.6" fill="none" stroke="#d2d2d2" stroke-width="1.2" stroke-width="1"/></svg>
<svg class="abs" style="left:20.3px;top:282.5px" width="2.6" height="2.6" viewBox="0 0 2.6 2.6"><path d="M2.6,0V2.6H0Z" fill="#c6c6c6"/></svg>
<svg class="abs" style="left:7.5px;top:288.2px" width="13.0" height="13.0" viewBox="0 0 13 13"><path d="M.8,9.6C3,9.6 3.6,5.6 5.2,5.6C6.8,5.6 6.6,8.4 8.6,8.4C10.6,8.4 10.6,4.4 12.4,4.4V12H.8Z" fill="#d2d2d2"/><circle cx="4.2" cy="2.6" r="1.7" fill="#d2d2d2"/></svg>
<svg class="abs" style="left:20.3px;top:298.3px" width="2.6" height="2.6" viewBox="0 0 2.6 2.6"><path d="M2.6,0V2.6H0Z" fill="#c6c6c6"/></svg>
<svg class="abs" style="left:7.5px;top:304.0px" width="13.0" height="13.0" viewBox="0 0 13 13"><rect x="2.4" y="2" width="8.4" height="8.4" fill="none" stroke="#d2d2d2" stroke-width="1.2" stroke-dasharray="1.6 1"/><rect x=".8" y=".6" width="2.8" height="2.8" fill="#d2d2d2"/><rect x="9.6" y="9" width="2.8" height="2.8" fill="#d2d2d2"/><path d="M.8,1L7.2,6.6L4.2,7L2.6,10.2Z" fill="#d2d2d2"/></svg>
<svg class="abs" style="left:20.3px;top:314.1px" width="2.6" height="2.6" viewBox="0 0 2.6 2.6"><path d="M2.6,0V2.6H0Z" fill="#c6c6c6"/></svg>
<svg class="abs" style="left:7.5px;top:319.8px" width="13.0" height="13.0" viewBox="0 0 13 13"><circle cx="4.6" cy="5" r="3.8" fill="none" stroke="#d2d2d2" stroke-width="1.2"/><circle cx="8" cy="8" r="3.8" fill="none" stroke="#d2d2d2" stroke-width="1.2"/><path d="M6,6.6L12.4,11L9.4,11.2L8,13.4Z" fill="#d2d2d2"/></svg>
<svg class="abs" style="left:20.3px;top:329.9px" width="2.6" height="2.6" viewBox="0 0 2.6 2.6"><path d="M2.6,0V2.6H0Z" fill="#c6c6c6"/></svg>
<svg class="abs" style="left:7.5px;top:335.6px" width="13.0" height="13.0" viewBox="0 0 13 13"><path d="M1.4,1V11.6M1.4,1L11.4,8M1.4,11.6L11.4,8M1.4,6.2L8,5.6M5.4,3.8V10.2M8.6,6V9" fill="none" stroke="#d2d2d2" stroke-width="1.2" stroke-width="1"/></svg>
<svg class="abs" style="left:20.3px;top:345.7px" width="2.6" height="2.6" viewBox="0 0 2.6 2.6"><path d="M2.6,0V2.6H0Z" fill="#c6c6c6"/></svg>
<svg class="abs" style="left:7.5px;top:351.4px" width="13.0" height="13.0" viewBox="0 0 13 13"><rect x="1" y="1" width="11" height="11" fill="none" stroke="#d2d2d2" stroke-width="1.2" stroke-width="1"/><path d="M1,4.6C4,3.4 8,6 12,4.6M1,8.4C4,7.2 8,9.8 12,8.4M4.6,1C3.6,4 6,8 4.6,12M8.4,1C7.4,4 9.8,8 8.4,12" fill="none" stroke="#d2d2d2" stroke-width="1.2" stroke-width=".9"/></svg>
<svg class="abs" style="left:7.5px;top:367.2px" width="13.0" height="13.0" viewBox="0 0 13 13"><defs><linearGradient id="tg" x1="0" x2="1"><stop offset="0" stop-color="#f0f0f0"/><stop offset="1" stop-color="#3a3a3a"/></linearGradient></defs><rect x="1" y="1.4" width="11" height="10" fill="url(#tg)" stroke="#d2d2d2" stroke-width="1"/></svg>
<svg class="abs" style="left:7.5px;top:383.0px" width="13.0" height="13.0" viewBox="0 0 13 13"><path d="M9.6,.8C11,.2 12.8,2 12.2,3.400L10,5.600L7.400,3Z" fill="#d2d2d2"/><path d="M7.600,4.200L2,9.800L1,12L3.200,11L8.800,5.400Z" fill="#d2d2d2"/></svg>
<svg class="abs" style="left:20.3px;top:393.1px" width="2.6" height="2.6" viewBox="0 0 2.6 2.6"><path d="M2.6,0V2.6H0Z" fill="#c6c6c6"/></svg>
<svg class="abs" style="left:7.5px;top:398.8px" width="13.0" height="13.0" viewBox="0 0 13 13"><path d="M9.6,.8C11,.2 12.8,2 12.2,3.400L10,5.600L7.400,3Z" fill="#d2d2d2"/><path d="M7.600,4.200L2,9.800L1,12L3.200,11L8.800,5.400Z" fill="none" stroke="#d2d2d2" stroke-width="1.2" stroke-width="1"/></svg>
<svg class="abs" style="left:20.3px;top:408.9px" width="2.6" height="2.6" viewBox="0 0 2.6 2.6"><path d="M2.6,0V2.6H0Z" fill="#c6c6c6"/></svg>
<svg class="abs" style="left:7.5px;top:414.6px" width="13.0" height="13.0" viewBox="0 0 13 13"><rect x=".8" y="1.6" width="6.4" height="5" fill="#d2d2d2"/><rect x="5.600" y="5.600" width="6.600" height="5.400" fill="none" stroke="#d2d2d2" stroke-width="1.2"/><path d="M3,4.200C5,4 7,6 9,8" fill="none" stroke="#d2d2d2" stroke-width="1.2" stroke-width=".9"/></svg>
<svg class="abs" style="left:20.3px;top:424.7px" width="2.6" height="2.6" viewBox="0 0 2.6 2.6"><path d="M2.6,0V2.6H0Z" fill="#c6c6c6"/></svg>
<svg class="abs" style="left:7.5px;top:430.4px" width="13.0" height="13.0" viewBox="0 0 13 13"><rect x="3.600" y="3.600" width="8.400" height="8.400" fill="none" stroke="#d2d2d2" stroke-width="1.2"/><rect x="6" y="6.400" width="3.600" height="3" fill="#d2d2d2"/><path d="M.8,2.400H5M2.800,.6V4.600" fill="none" stroke="#d2d2d2" stroke-width="1.2" stroke-width="1"/><rect x="5.400" y="1.400" width="3" height="2.200" fill="#d2d2d2"/></svg>
<svg class="abs" style="left:20.3px;top:440.5px" width="2.6" height="2.6" viewBox="0 0 2.6 2.6"><path d="M2.6,0V2.6H0Z" fill="#c6c6c6"/></svg>
<svg class="abs" style="left:7.5px;top:446.2px" width="13.0" height="13.0" viewBox="0 0 13 13"><path d="M1,.8V12H12.600" fill="none" stroke="#d2d2d2" stroke-width="1.2"/><rect x="2.600" y="5.400" width="2" height="5.600" fill="#d2d2d2"/><rect x="5.600" y="2" width="2" height="9" fill="#d2d2d2"/><rect x="8.600" y="6.600" width="2" height="4.400" fill="#d2d2d2"/></svg>
<svg class="abs" style="left:20.3px;top:456.3px" width="2.6" height="2.6" viewBox="0 0 2.6 2.6"><path d="M2.6,0V2.6H0Z" fill="#c6c6c6"/></svg>
<svg class="abs" style="left:7.5px;top:462.0px" width="13.0" height="13.0" viewBox="0 0 13 13"><path d="M3.200,.6V10.200H12.800M.4,3.200H10V12.600" fill="none" stroke="#d2d2d2" stroke-width="1.2" stroke-width="1.100"/></svg>
<svg class="abs" style="left:20.3px;top:472.1px" width="2.6" height="2.6" viewBox="0 0 2.6 2.6"><path d="M2.6,0V2.6H0Z" fill="#c6c6c6"/></svg>
<svg class="abs" style="left:7.5px;top:477.8px" width="13.0" height="13.0" viewBox="0 0 13 13"><path d="M9.400,.8L12.400,3.800L6,10.200L2.400,11L3.200,7.400Z" fill="#d2d2d2"/><path d="M.6,12.600L3.200,10" stroke="#d2d2d2" stroke-width="1.100"/></svg>
<svg class="abs" style="left:20.3px;top:487.9px" width="2.6" height="2.6" viewBox="0 0 2.6 2.6"><path d="M2.6,0V2.6H0Z" fill="#c6c6c6"/></svg>
<svg class="abs" style="left:7.5px;top:493.6px" width="13.0" height="13.0" viewBox="0 0 13 13"><path d="M3.400,12.200C2,10 .6,8.400 .8,7.200C1,6.200 2.200,6.400 3,7.600V2.400C3,1.200 4.600,1.200 4.600,2.400V1.600C4.600,.4 6.200,.4 6.200,1.600V2C6.200,.8 7.800,.8 7.800,2V3C7.800,2 9.400,2 9.400,3.200V8C9.400,10 9,11 8.400,12.200Z" fill="#d2d2d2"/></svg>
<svg class="abs" style="left:20.3px;top:503.7px" width="2.6" height="2.6" viewBox="0 0 2.6 2.6"><path d="M2.6,0V2.6H0Z" fill="#c6c6c6"/></svg>
<svg class="abs" style="left:7.5px;top:509.4px" width="13.0" height="13.0" viewBox="0 0 13 13"><path d="M1.400,.6V12.600" fill="none" stroke="#d2d2d2" stroke-width="1.2"/><rect x="3" y="2" width="5" height="3.400" fill="#d2d2d2"/><rect x="3" y="7" width="8.600" height="3.400" fill="#d2d2d2"/></svg>
<svg class="abs" style="left:7.5px;top:525.2px" width="13.0" height="13.0" viewBox="0 0 13 13"><circle cx="5" cy="5" r="4" fill="none" stroke="#d2d2d2" stroke-width="1.2" stroke-width="1.400"/><path d="M8,8L12.200,12.200" stroke="#d2d2d2" stroke-width="1.800"/></svg>
<svg class="abs" style="left:3.5px;top:543.5px" width="8.5" height="8.5" viewBox="0 0 8.5 8.5"><rect x=".5" y=".5" width="6" height="6" fill="#fff" stroke="#222" stroke-width=".8"/><rect x="3.400" y="3.400" width="5.200" height="5.200" fill="#111" stroke="#eee" stroke-width=".9"/></svg>
<svg class="abs" style="left:16.5px;top:543.5px" width="7.0" height="8.0" viewBox="0 0 7 8"><path d="M1,2.400C4.600,2 6.200,4 6,7.600M1,2.400L3,.6M1,2.400L3,4.400M6,7.600L4.200,5.800M6,7.600L7.600,5.800" fill="none" stroke="#d2d2d2" stroke-width="1.2" stroke-width="1.100"/></svg>
<div class="abs" style="left:813.0px;top:45.0px;width:187.0px;height:8.0px;background:#454545;"></div>
<div class="abs" style="left:813.0px;top:53.0px;width:27.0px;height:502.0px;background:#535353;"></div>
<div class="abs" style="left:812.5px;top:53.0px;width:1.0px;height:502.0px;background:#464646;"></div>
<svg class="abs" style="left:828.5px;top:46.5px" width="5.5" height="4.5" viewBox="0 0 5.5 4.5"><path d="M2,.5L.4,2.200L2,4 M4.600,.5L3,2.200L4.600,4" fill="none" stroke="#cfcfcf" stroke-width=".9"/></svg>
<svg class="abs" style="left:992.0px;top:46.5px" width="5.5" height="4.5" viewBox="0 0 5.5 4.5"><path d="M.4,.5L2,2.200L.4,4 M3,.5L4.600,2.200L3,4" fill="none" stroke="#cfcfcf" stroke-width=".9"/></svg>
<div class="abs" style="left:820.0px;top:56.0px;width:1.0px;height:1.0px;background:#414141;"></div>
<div class="abs" style="left:822.0px;top:56.0px;width:1.0px;height:1.0px;background:#414141;"></div>
<div class="abs" style="left:824.0px;top:56.0px;width:1.0px;height:1.0px;background:#414141;"></div>
<div class="abs" style="left:826.0px;top:56.0px;width:1.0px;height:1.0px;background:#414141;"></div>
<div class="abs" style="left:828.0px;top:56.0px;width:1.0px;height:1.0px;background:#414141;"></div>
<div class="abs" style="left:830.0px;top:56.0px;width:1.0px;height:1.0px;background:#414141;"></div>
<div class="abs" style="left:832.0px;top:56.0px;width:1.0px;height:1.0px;background:#414141;"></div>
<svg class="abs" style="left:820.0px;top:62.0px" width="13.0" height="13.0" viewBox="0 0 13 13"><defs><radialGradient id="cg"><stop offset="0" stop-color="#fff"/><stop offset=".55" stop-color="#d8d8d8"/><stop offset="1" stop-color="#8a8a8a"/></radialGradient></defs><circle cx="6.500" cy="6.500" r="6" fill="url(#cg)"/></svg>
<svg class="abs" style="left:820.0px;top:80.0px" width="13.0" height="13.0" viewBox="0 0 13 13"><rect x="3.600" y=".8" width="8.600" height="8.600" fill="none" stroke="#d6d6d6" stroke-width="1.200"/><circle cx="4.200" cy="8.800" r="3.400" fill="#535353" stroke="#d6d6d6" stroke-width="1.100"/><path d="M2,8.800H6.400M4.200,6.600V11" stroke="#d6d6d6" stroke-width=".8"/></svg>
<div class="abs" style="left:814.0px;top:99.0px;width:25.0px;height:1.0px;background:#444;"></div>
<div class="abs" style="left:820.0px;top:102.5px;width:1.0px;height:1.0px;background:#414141;"></div>
<div class="abs" style="left:822.0px;top:102.5px;width:1.0px;height:1.0px;background:#414141;"></div>
<div class="abs" style="left:824.0px;top:102.5px;width:1.0px;height:1.0px;background:#414141;"></div>
<div class="abs" style="left:826.0px;top:102.5px;width:1.0px;height:1.0px;background:#414141;"></div>
<div class="abs" style="left:828.0px;top:102.5px;width:1.0px;height:1.0px;background:#414141;"></div>
<div class="abs" style="left:830.0px;top:102.5px;width:1.0px;height:1.0px;background:#414141;"></div>
<div class="abs" style="left:832.0px;top:102.5px;width:1.0px;height:1.0px;background:#414141;"></div>
<svg class="abs" style="left:819.5px;top:106.5px" width="14.0" height="14.0" viewBox="0 0 14 14"><circle cx="5.400" cy="5.400" r="4.800" fill="#d0d0d0"/><circle cx="8.600" cy="8.600" r="4.800" fill="#8d8d8d" stroke="#b5b5b5" stroke-width=".8"/></svg>
<div class="abs" style="left:814.0px;top:125.5px;width:25.0px;height:1.0px;background:#444;"></div>
<div class="abs" style="left:820.0px;top:129.0px;width:1.0px;height:1.0px;background:#414141;"></div>
<div class="abs" style="left:822.0px;top:129.0px;width:1.0px;height:1.0px;background:#414141;"></div>
<div class="abs" style="left:824.0px;top:129.0px;width:1.0px;height:1.0px;background:#414141;"></div>
<div class="abs" style="left:826.0px;top:129.0px;width:1.0px;height:1.0px;background:#414141;"></div>
<div class="abs" style="left:828.0px;top:129.0px;width:1.0px;height:1.0px;background:#414141;"></div>
<div class="abs" style="left:830.0px;top:129.0px;width:1.0px;height:1.0px;background:#414141;"></div>
<div class="abs" style="left:832.0px;top:129.0px;width:1.0px;height:1.0px;background:#414141;"></div>
<svg class="abs" style="left:820.5px;top:133.5px" width="12.0" height="12.0" viewBox="0 0 12 12"><rect x="1.600" y="1.600" width="8.800" height="8.800" fill="none" stroke="#cfcfcf" stroke-width="1" stroke-dasharray="1.400 1.200"/><rect x="0" y="0" width="3" height="3" fill="#d6d6d6"/><rect x="9" y="0" width="3" height="3" fill="#d6d6d6"/><rect x="0" y="9" width="3" height="3" fill="#d6d6d6"/><rect x="9" y="9" width="3" height="3" fill="#d6d6d6"/></svg>
<div class="abs" style="left:814.0px;top:151.5px;width:25.0px;height:1.0px;background:#444;"></div>
<div class="abs" style="left:820.0px;top:155.0px;width:1.0px;height:1.0px;background:#414141;"></div>
<div class="abs" style="left:822.0px;top:155.0px;width:1.0px;height:1.0px;background:#414141;"></div>
<div class="abs" style="left:824.0px;top:155.0px;width:1.0px;height:1.0px;background:#414141;"></div>
<div class="abs" style="left:826.0px;top:155.0px;width:1.0px;height:1.0px;background:#414141;"></div>
<div class="abs" style="left:828.0px;top:155.0px;width:1.0px;height:1.0px;background:#414141;"></div>
<div class="abs" style="left:830.0px;top:155.0px;width:1.0px;height:1.0px;background:#414141;"></div>
<div class="abs" style="left:832.0px;top:155.0px;width:1.0px;height:1.0px;background:#414141;"></div>
<svg class="abs" style="left:820.5px;top:162.0px" width="12.0" height="12.0" viewBox="0 0 12 12"><path d="M5,1.200H.8V11.200H10.800V7" fill="none" stroke="#d6d6d6" stroke-width="1.300"/><path d="M5.600,6.400L11,1M7,.8H11.200V5" fill="none" stroke="#d6d6d6" stroke-width="1.300"/></svg>
<div class="abs" style="left:814.0px;top:179.0px;width:25.0px;height:1.0px;background:#484848;"></div>
<div class="abs" style="left:840.0px;top:53.0px;width:160.0px;height:502.0px;background:#535353;"></div>
<div class="abs" style="left:839.0px;top:53.0px;width:1.0px;height:502.0px;background:#424242;"></div>
<div class="abs" style="left:993.5px;top:70.0px;width:6.5px;height:117.0px;background:#4b4b4b;"></div>
<div class="abs" style="left:993.5px;top:205.0px;width:6.5px;height:311.0px;background:#4b4b4b;"></div>
<div class="abs" style="left:840.0px;top:53.0px;width:160.0px;height:17.5px;background:#424242;"></div>
<div class="abs" style="left:899.5px;top:53.0px;width:30.5px;height:17.5px;background:#535353;"></div>
<div class="t" style="left:845.0px;top:58.7px;font-size:6.50px;color:#b9b9b9;transform:scaleX(1.127);">Color</div>
<div class="t" style="left:873.5px;top:58.7px;font-size:6.50px;color:#b9b9b9;transform:scaleX(0.999);">Layers</div>
<svg class="abs" style="left:901.5px;top:59.0px" width="3.0" height="5.5" viewBox="0 0 3 5.5"><path d="M1.500,.4L2.700,2L.3,2Z M1.500,5.100L2.700,3.500L.3,3.500Z" fill="#c8c8c8"/></svg>
<div class="t" style="left:908.0px;top:58.6px;font-size:6.70px;color:#ffffff;font-weight:bold;transform:scaleX(1.027);">Align</div>
<div class="t" style="left:936.5px;top:58.7px;font-size:6.50px;color:#b9b9b9;transform:scaleX(1.097);">Pathfinder</div>
<svg class="abs" style="left:989.5px;top:58.5px" width="8.0" height="6.0" viewBox="0 0 8 6"><path d="M0,.6H8M0,3H8M0,5.400H8" stroke="#cfcfcf" stroke-width="1"/></svg>
<div class="t" style="left:843.0px;top:77.6px;font-size:6.70px;color:#dedede;transform:scaleX(0.968);">Align Objects:</div>
<svg class="abs" style="left:845.5px;top:91.5px" width="11.0" height="11.0" viewBox="0 0 11 11"><path d="M.6,0V11" stroke="#d2d2d2" stroke-width="1"/><rect x="2.2" y="1.4" width="4.4" height="3.2" fill="#d2d2d2"/><rect x="2.2" y="6.2" width="8" height="3.2" fill="#d2d2d2"/></svg>
<svg class="abs" style="left:869.3px;top:91.5px" width="11.0" height="11.0" viewBox="0 0 11 11"><path d="M5.5,0V11" stroke="#d2d2d2" stroke-width="1"/><rect x="3.2" y="1.4" width="4.6" height="3.2" fill="#d2d2d2"/><rect x="1.4" y="6.2" width="8.2" height="3.2" fill="#d2d2d2"/></svg>
<svg class="abs" style="left:893.5px;top:91.5px" width="11.0" height="11.0" viewBox="0 0 11 11"><path d="M10.4,0V11" stroke="#d2d2d2" stroke-width="1"/><rect x="4.4" y="1.4" width="4.4" height="3.2" fill="#d2d2d2"/><rect x=".8" y="6.2" width="8" height="3.2" fill="#d2d2d2"/></svg>
<svg class="abs" style="left:936.5px;top:91.5px" width="11.0" height="11.0" viewBox="0 0 11 11"><path d="M0,.6H11" stroke="#d2d2d2" stroke-width="1"/><rect x="1.6" y="2.2" width="3.2" height="8" fill="#d2d2d2"/><rect x="6.2" y="2.2" width="3.2" height="4.4" fill="#d2d2d2"/></svg>
<svg class="abs" style="left:961.3px;top:91.5px" width="11.0" height="11.0" viewBox="0 0 11 11"><path d="M0,5.5H11" stroke="#d2d2d2" stroke-width="1"/><rect x="1.6" y="1.4" width="3.2" height="8.2" fill="#d2d2d2"/><rect x="6.2" y="3.2" width="3.2" height="4.6" fill="#d2d2d2"/></svg>
<svg class="abs" style="left:984.3px;top:91.5px" width="11.0" height="11.0" viewBox="0 0 11 11"><path d="M0,10.4H11" stroke="#d2d2d2" stroke-width="1"/><rect x="1.6" y=".8" width="3.2" height="8" fill="#d2d2d2"/><rect x="6.2" y="4.4" width="3.2" height="4.4" fill="#d2d2d2"/></svg>
<div class="abs" style="left:843.0px;top:107.0px;width:150.0px;height:1.0px;background:#4b4b4b;"></div>
<div class="t" style="left:843.0px;top:116.2px;font-size:6.70px;color:#dedede;transform:scaleX(0.987);">Distribute Objects:</div>
<svg class="abs" style="left:845.5px;top:130.0px" width="11.0" height="11.0" viewBox="0 0 11 11"><path d="M0,.6H11M0,6H11" stroke="#d2d2d2" stroke-width="1"/><rect x="3" y="1.8" width="5" height="2.6" fill="#d2d2d2"/><rect x="1.6" y="7.2" width="7.8" height="2.8" fill="#d2d2d2"/></svg>
<svg class="abs" style="left:869.3px;top:130.0px" width="11.0" height="11.0" viewBox="0 0 11 11"><path d="M0,3H11M0,8.2H11" stroke="#d2d2d2" stroke-width="1"/><rect x="3" y="1.6" width="5" height="2.8" fill="#d2d2d2"/><rect x="1.6" y="6.8" width="7.8" height="2.8" fill="#d2d2d2"/></svg>
<svg class="abs" style="left:893.5px;top:130.0px" width="11.0" height="11.0" viewBox="0 0 11 11"><path d="M0,4.6H11M0,10.4H11" stroke="#d2d2d2" stroke-width="1"/><rect x="3" y="1.4" width="5" height="2.6" fill="#d2d2d2"/><rect x="1.6" y="6.6" width="7.8" height="2.8" fill="#d2d2d2"/></svg>
<svg class="abs" style="left:936.5px;top:130.0px" width="11.0" height="11.0" viewBox="0 0 11 11"><path d="M.6,0V11M6,0V11" stroke="#d2d2d2" stroke-width="1"/><rect x="1.8" y="1.6" width="2.8" height="7.8" fill="#d2d2d2"/><rect x="7.2" y="3" width="2.6" height="5" fill="#d2d2d2"/></svg>
<svg class="abs" style="left:961.3px;top:130.0px" width="11.0" height="11.0" viewBox="0 0 11 11"><path d="M3,0V11M8.2,0V11" stroke="#d2d2d2" stroke-width="1"/><rect x="1.6" y="1.6" width="2.8" height="7.8" fill="#d2d2d2"/><rect x="6.8" y="3" width="2.8" height="5" fill="#d2d2d2"/></svg>
<svg class="abs" style="left:984.3px;top:130.0px" width="11.0" height="11.0" viewBox="0 0 11 11"><path d="M4.6,0V11M10.4,0V11" stroke="#d2d2d2" stroke-width="1"/><rect x="1.4" y="1.6" width="2.6" height="7.8" fill="#d2d2d2"/><rect x="6.6" y="3" width="2.8" height="5" fill="#d2d2d2"/></svg>
<div class="abs" style="left:843.0px;top:146.0px;width:150.0px;height:1.0px;background:#4b4b4b;"></div>
<div class="t" style="left:842.5px;top:154.8px;font-size:6.70px;color:#dedede;transform:scaleX(0.978);">Distribute Spacing:</div>
<div class="t" style="left:940.0px;top:154.8px;font-size:6.70px;color:#dedede;transform:scaleX(0.977);">Align To:</div>
<div class="abs" style="left:930.5px;top:151.0px;width:1.0px;height:34.0px;background:#474747;"></div>
<svg class="abs" style="left:845.5px;top:169.5px" width="12.0" height="11.0" viewBox="0 0 12 11"><path d="M1.400,0V11M.2,1.600L1.400,.2L2.600,1.600M.2,9.400L1.400,10.800L2.600,9.400" fill="none" stroke="#d2d2d2" stroke-width=".8"/><rect x="5" y="1" width="4.600" height="3" fill="#d2d2d2"/><rect x="3.800" y="6.600" width="7.800" height="3.200" fill="#d2d2d2"/></svg>
<svg class="abs" style="left:866.5px;top:169.0px" width="12.0" height="12.0" viewBox="0 0 12 12"><path d="M0,1.400H8M1.600,.2L.2,1.400L1.600,2.600M6.400,.2L7.800,1.400L6.400,2.600" fill="none" stroke="#d2d2d2" stroke-width=".8"/><rect x="1" y="3.800" width="3.200" height="8" fill="#d2d2d2"/><rect x="6" y="5" width="3.600" height="4.600" fill="#d2d2d2"/></svg>
<div class="abs" style="left:886.5px;top:168.0px;width:36.0px;height:14.5px;background:#5b5b5b;"></div>
<div class="t" style="left:893.0px;top:172.9px;font-size:6.00px;color:#6c6c6c;transform:scaleX(1.411);">0 px</div>
<div class="abs" style="left:941.0px;top:167.0px;width:15.0px;height:15.5px;background:#262626;border-radius:1.500px;"></div>
<svg class="abs" style="left:943.0px;top:169.5px" width="11.0" height="11.0" viewBox="0 0 11 11"><path d="M3.400,1.800H7.200L9.800,4.400V10.200H3.400Z" fill="#ededed"/><path d="M7.200,1.800V4.400H9.800" fill="none" stroke="#262626" stroke-width=".8"/><path d="M1.800,0V3.600M0,1.800H3.600" stroke="#ededed" stroke-width=".9"/></svg>
<svg class="abs" style="left:963.5px;top:169.5px" width="11.0" height="11.0" viewBox="0 0 11 11"><rect x="1.400" y="1.400" width="8.200" height="8.200" fill="none" stroke="#bdbdbd" stroke-width=".9" stroke-dasharray="1.200 1.200"/><path d="M5.500,.4V10.600M.4,5.500H10.600" stroke="#bdbdbd" stroke-width=".8" stroke-dasharray="1.200 1.200"/></svg>
<svg class="abs" style="left:983.5px;top:169.5px" width="11.0" height="11.0" viewBox="0 0 11 11"><rect x="1.400" y="1.400" width="8.200" height="8.200" fill="none" stroke="#bdbdbd" stroke-width=".9" stroke-dasharray="1.200 1.200"/><path d="M3,3L8,8M8,3V8H3" stroke="#cfcfcf" stroke-width="1" fill="none"/></svg>
<div class="abs" style="left:840.0px;top:187.0px;width:160.0px;height:1.0px;background:#3b3b3b;"></div>
<div class="abs" style="left:840.0px;top:188.0px;width:160.0px;height:17.5px;background:#424242;"></div>
<div class="abs" style="left:840.0px;top:188.0px;width:58.0px;height:17.5px;background:#535353;"></div>
<div class="t" style="left:846.0px;top:193.7px;font-size:6.80px;color:#ffffff;font-weight:bold;transform:scaleX(0.956);">Document Info</div>
<div class="t" style="left:904.0px;top:193.9px;font-size:6.50px;color:#b9b9b9;transform:scaleX(1.027);">Gradient</div>
<svg class="abs" style="left:989.5px;top:194.0px" width="8.0" height="6.0" viewBox="0 0 8 6"><path d="M0,.6H8M0,3H8M0,5.400H8" stroke="#cfcfcf" stroke-width="1"/></svg>
<div class="t" style="left:844.2px;top:213.5px;font-size:6.50px;color:#e4e4e4;transform:scaleX(1.012);">Document:</div>
<div class="t" style="left:844.2px;top:229.1px;font-size:6.50px;color:#e4e4e4;transform:scaleX(1.009);">Name: world oceans day 18.ai</div>
<div class="t" style="left:844.2px;top:245.6px;font-size:6.50px;color:#e4e4e4;transform:scaleX(0.972);">Color Mode: RGB color</div>
<div class="t" style="left:844.2px;top:253.4px;font-size:6.50px;color:#e4e4e4;transform:scaleX(0.976);">Color Profile: sRGB IEC61966-2.1</div>
<div class="t" style="left:844.2px;top:261.4px;font-size:6.50px;color:#e4e4e4;transform:scaleX(0.997);">Ruler Units: pixels</div>
<div class="t" style="left:844.2px;top:269.1px;font-size:6.50px;color:#e4e4e4;transform:scaleX(1.014);">Artboard Dimensions: 5500 px x 3000 px</div>
<div class="t" style="left:844.2px;top:276.9px;font-size:6.50px;color:#e4e4e4;transform:scaleX(0.993);">Show Images in Outline Mode: OFF</div>
<div class="t" style="left:844.2px;top:284.7px;font-size:6.50px;color:#e4e4e4;transform:scaleX(1.004);">Highlight Substituted Fonts: OFF</div>
<div class="t" style="left:844.2px;top:292.6px;font-size:6.50px;color:#e4e4e4;transform:scaleX(1.013);">Highlight Substituted Glyphs: OFF</div>
<div class="t" style="left:844.2px;top:300.5px;font-size:6.50px;color:#e4e4e4;transform:scaleX(0.994);">Preserve Text Editability</div>
<div class="t" style="left:844.2px;top:308.7px;font-size:6.50px;color:#e4e4e4;transform:scaleX(0.980);">Simulate Colored Paper: OFF</div>
<div class="abs" style="left:840.0px;top:516.0px;width:160.0px;height:1.0px;background:#3b3b3b;"></div>
<div class="abs" style="left:840.0px;top:517.0px;width:160.0px;height:19.0px;background:#424242;"></div>
<div class="abs" style="left:840.0px;top:517.0px;width:52.0px;height:19.0px;background:#535353;"></div>
<svg class="abs" style="left:843.5px;top:523.0px" width="3.0" height="5.5" viewBox="0 0 3 5.5"><path d="M1.500,.4L2.700,2L.3,2Z M1.500,5.100L2.700,3.500L.3,3.500Z" fill="#c8c8c8"/></svg>
<div class="t" style="left:849.6px;top:522.7px;font-size:6.80px;color:#ffffff;font-weight:bold;transform:scaleX(0.935);">Color Guide</div>
<svg class="abs" style="left:989.5px;top:523.5px" width="8.0" height="6.0" viewBox="0 0 8 6"><path d="M0,.6H8M0,3H8M0,5.400H8" stroke="#8c8c8c" stroke-width="1"/></svg>
<div class="abs" style="left:840.0px;top:536.0px;width:160.0px;height:1.0px;background:#3b3b3b;"></div>
<div class="abs" style="left:840.0px;top:537.0px;width:160.0px;height:18.0px;background:#424242;"></div>
<div class="abs" style="left:840.0px;top:537.0px;width:35.0px;height:18.0px;background:#535353;"></div>
<div class="t" style="left:845.6px;top:543.2px;font-size:6.60px;color:#ffffff;font-weight:bold;transform:scaleX(0.886);">Brushes</div>
<div class="t" style="left:881.6px;top:543.2px;font-size:6.60px;color:#a9a9a9;font-weight:bold;transform:scaleX(0.993);">Stroke</div>
<div class="t" style="left:915.0px;top:543.2px;font-size:6.60px;color:#a9a9a9;font-weight:bold;transform:scaleX(0.945);">Symbols</div>
<svg class="abs" style="left:989.5px;top:543.5px" width="8.0" height="6.0" viewBox="0 0 8 6"><path d="M0,.6H8M0,3H8M0,5.400H8" stroke="#cfcfcf" stroke-width="1"/></svg>
</div></body></html>
